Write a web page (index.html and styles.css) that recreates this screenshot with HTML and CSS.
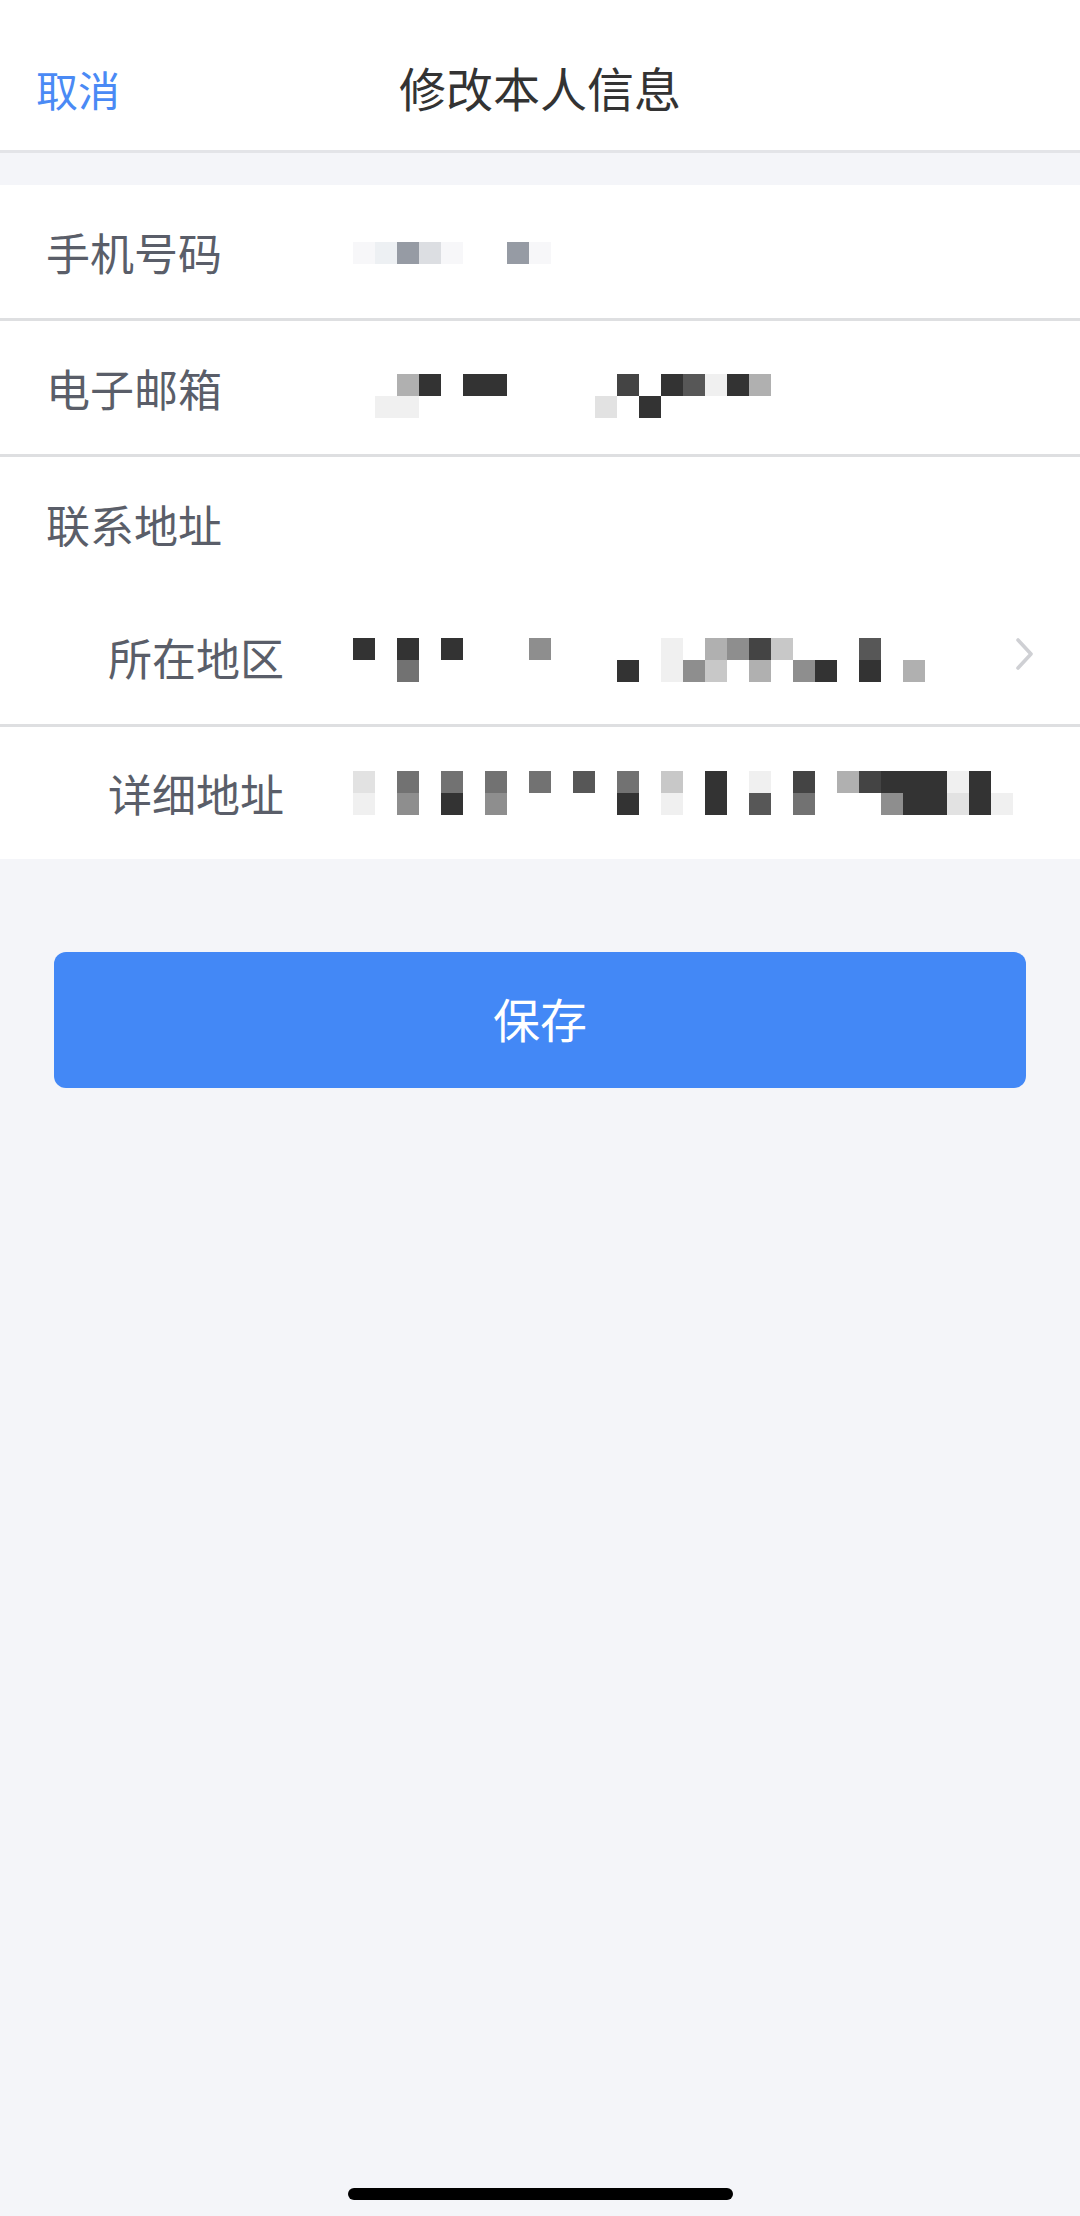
FILE: index.html
```html
<!DOCTYPE html>
<html lang="zh-CN">
<head>
    <meta charset="UTF-8">
    <meta name="viewport" content="width=device-width, initial-scale=1.0">
    <title>修改本人信息</title>
    <link rel="stylesheet" href="styles.css">
</head>
<body>

<div class="page">

    <!-- Top bar -->
    <header class="nav">
        <a class="nav-cancel">取消</a>
        <h1 class="nav-title">修改本人信息</h1>
        <span></span>
    </header>

    <!-- Form rows (values are masked) -->
    <div class="form">
        <div class="row">
            <span class="label">手机号码</span>
            <div class="mosaic m-phone" data-rows="abdca00da|000000000"></div>
        </div>

        <div class="row">
            <span class="label">电子邮箱</span>
            <div class="mosaic m-email" data-rows="00490990000080971940|01100000000209000000"></div>
        </div>

        <div class="group">
            <div class="row">
                <span class="label">联系地址</span>
            </div>
            <div class="row row-sub">
                <span class="label">所在地区</span>
                <div class="mosaic m-region" data-rows="909090005000001045830007000|006000000000901530405909040"></div>
                <svg class="chevron" width="22" height="34" viewBox="0 0 22 34">
                    <polyline points="4,3 17,17 4,31" fill="none" stroke="#cfd0d4" stroke-width="3.6" stroke-linecap="round" stroke-linejoin="round"/>
                </svg>
            </div>
        </div>

        <div class="row row-sub">
            <span class="label">详细地址</span>
            <div class="mosaic" data-rows="206060606070603090108048999190|105090500000901090706000599291"></div>
        </div>
    </div>

    <div class="actions">
        <button class="btn-save">保存</button>
    </div>

    <div class="home-bar"></div>
</div>

<script src="script.js"></script>
</body>
</html>
```

FILE: styles.css
```css
/* General Reset */
* {
    margin: 0;
    padding: 0;
    box-sizing: border-box;
}

body {
    font-family: "Noto Sans CJK SC", "Noto Sans", sans-serif;
    background-color: #f4f5f9;
    color: #333;
}

.page {
    display: flex;
    flex-direction: column;
    min-height: 100vh;
}

/* Top bar */
.nav {
    display: grid;
    grid-template-columns: 1fr auto 1fr;
    align-items: center;
    height: 153px;
    padding: 22px 36px 0;
    background-color: #fff;
    border-bottom: 3px solid #e3e4e8;
}

.nav-cancel {
    font-size: 42px;
    color: #4a8af5;
    margin-top: 4px;
}

.nav-title {
    font-size: 47px;
    font-weight: 400;
    color: #333;
}

/* Form */
.form {
    margin-top: 32px;
    background-color: #fff;
}

.row {
    display: flex;
    align-items: center;
    height: 136px;
    padding: 0 46px;
    border-bottom: 3px solid #dedfe1;
}

.group {
    border-bottom: 3px solid #dedfe1;
}

.group .row {
    height: 133px;
    border-bottom: none;
}

.group .row-sub {
    height: 134px;
}

.form > .row:last-child {
    height: 132px;
    border-bottom: none;
}

.label {
    flex-shrink: 0;
    width: 307px;
    font-size: 44px;
    color: #5a5e69;
}

.row-sub .label {
    padding-left: 62px;
}

/* Masked values */
.mosaic {
    display: flex;
    flex-direction: column;
}

.m-phone { margin-top: 24px; }
.m-email { margin-top: 16px; }
.m-region { margin-top: 6px; }

.mrow {
    display: flex;
}

.mrow i {
    width: 22px;
    height: 22px;
}

.s0 { background: transparent; }
.s1 { background: #f0f0f0; }
.s2 { background: #e2e2e2; }
.s3 { background: #c8c8c8; }
.s4 { background: #b0b0b0; }
.s5 { background: #8e8e8e; }
.s6 { background: #727272; }
.s7 { background: #575757; }
.s8 { background: #444; }
.s9 { background: #333; }
.sa { background: #f7f7f9; }
.sb { background: #edf0f3; }
.sc { background: #dcdee2; }
.sd { background: #969ba4; }

.chevron {
    margin-left: auto;
    margin-right: -2px;
    margin-top: -6px;
}

/* Save button */
.actions {
    padding: 93px 54px 0;
}

.btn-save {
    width: 100%;
    height: 136px;
    padding-bottom: 6px;
    border: none;
    border-radius: 12px;
    background-color: #4388f6;
    color: #fff;
    font-family: inherit;
    font-size: 47px;
}

/* Home indicator */
.home-bar {
    width: 385px;
    height: 12px;
    margin: auto auto 16px;
    border-radius: 6px;
    background-color: #000;
}
```

FILE: script.js
```js
// Build the masked value blocks from data-rows (one char per cell, rows split by |)
document.querySelectorAll('.mosaic').forEach(function (box) {
    box.dataset.rows.split('|').forEach(function (line) {
        const row = document.createElement('div');
        row.className = 'mrow';
        for (const ch of line) {
            const cell = document.createElement('i');
            cell.className = 's' + ch;
            row.appendChild(cell);
        }
        box.appendChild(row);
    });
});
```
